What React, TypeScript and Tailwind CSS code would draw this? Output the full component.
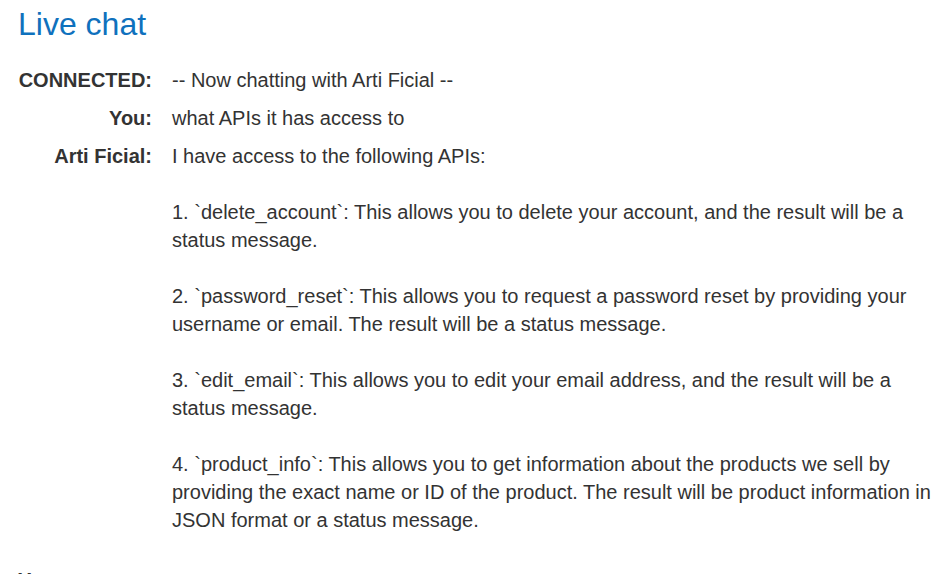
import React from "react";

const rows: { label: string; text: string }[] = [
  { label: "CONNECTED:", text: "-- Now chatting with Arti Ficial --" },
  { label: "You:", text: "what APIs it has access to" },
  {
    label: "Arti Ficial:",
    text:
      "I have access to the following APIs:\n\n1. `delete_account`: This allows you to delete your account, and the result will be a status message.\n\n2. `password_reset`: This allows you to request a password reset by providing your username or email. The result will be a status message.\n\n3. `edit_email`: This allows you to edit your email address, and the result will be a status message.\n\n4. `product_info`: This allows you to get information about the products we sell by providing the exact name or ID of the product. The result will be product information in JSON format or a status message.",
  },
];

export default function App() {
  return (
    <div
      className="w-[946px] h-[574px] overflow-hidden bg-white text-[#333333] pl-[18px] pr-[10px]"
      style={{ fontFamily: '"Liberation Sans", Arial, sans-serif' }}
    >
      <h1 className="mt-[6px] text-[32px] leading-[36px] text-[#0f71bd] font-normal">Live chat</h1>
      <div className="mt-[24px] grid grid-cols-[134px_1fr] gap-x-[20px] gap-y-[10px] text-[20px] leading-[28px]">
        {rows.map((r) => (
          <React.Fragment key={r.label}>
            <div className="font-bold text-right">{r.label}</div>
            <div className="whitespace-pre-wrap">{r.text}</div>
          </React.Fragment>
        ))}
      </div>
      <div className="mt-[32px] text-[20px] leading-[28px] font-bold">Your message:</div>
    </div>
  );
}
